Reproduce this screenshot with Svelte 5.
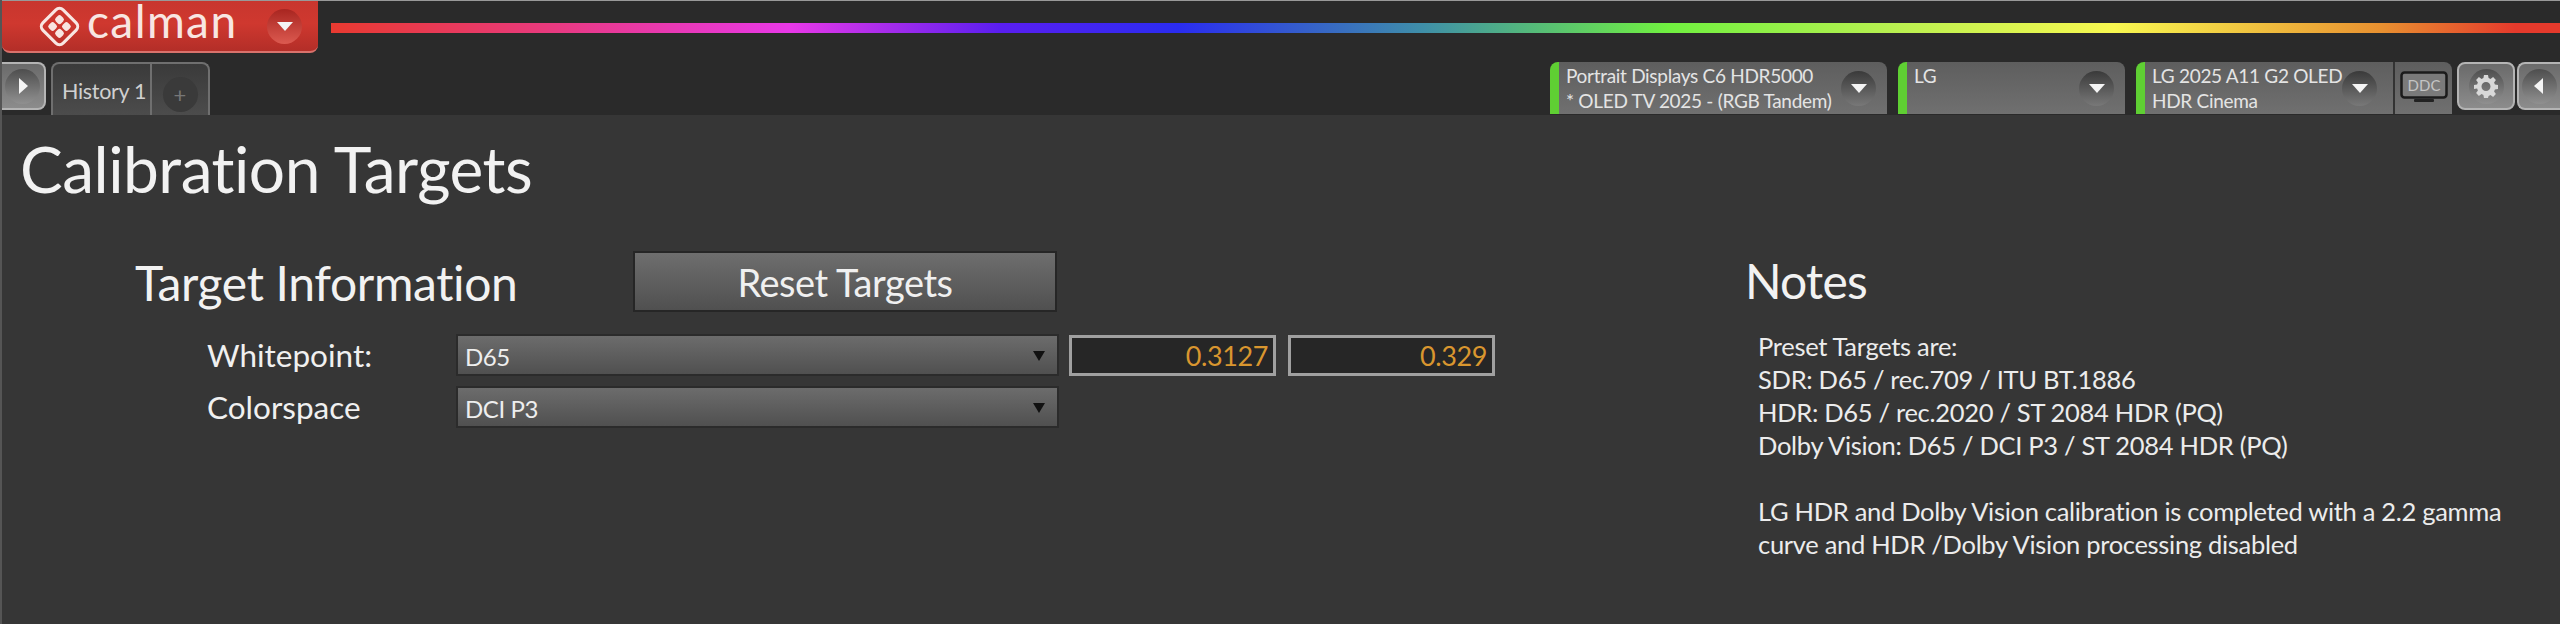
<script>
  const devices = [
    { lines: ['Portrait Displays C6 HDR5000', '* OLED TV 2025 - (RGB Tandem)'], width: 337 },
    { lines: ['LG', ''], width: 227 },
    { lines: ['LG 2025 A11 G2 OLED', 'HDR Cinema'], width: 316, ddc: true },
  ];

  const notes = [
    'Preset Targets are:',
    'SDR: D65 / rec.709 / ITU BT.1886',
    'HDR: D65 / rec.2020 / ST 2084 HDR (PQ)',
    'Dolby Vision: D65 / DCI P3 / ST 2084 HDR (PQ)',
    '',
    'LG HDR and Dolby Vision calibration is completed with a 2.2 gamma',
    'curve and HDR /Dolby Vision processing disabled',
  ];
</script>

<div class="app">
  <header class="top">
    <div class="brand-row">
      <div class="brand">
        <svg class="logo" viewBox="0 0 40 40" aria-hidden="true">
          <g transform="rotate(45 20 20)">
            <rect x="6" y="6" width="28" height="28" rx="5" fill="none" stroke="#f8e6e2" stroke-width="3" />
            <rect x="11.500" y="11.500" width="7.500" height="7.500" rx="2.500" fill="#f8e6e2" />
            <rect x="21" y="11.500" width="7.500" height="7.500" rx="2.500" fill="#f8e6e2" />
            <rect x="11.500" y="21" width="7.500" height="7.500" rx="2.500" fill="#f8e6e2" />
            <rect x="21" y="21" width="7.500" height="7.500" rx="2.500" fill="#f8e6e2" />
          </g>
        </svg>
        <span class="wordmark">calman</span>
        <span class="round red"><i class="tri-down"></i></span>
      </div>
      <div class="rainbow"></div>
    </div>

    <div class="tab-row">
      <button class="square first"><span class="round"><i class="tri-right"></i></span></button>
      <div class="tab">
        <span class="tab-label">History 1</span>
        <span class="tab-add"><span class="round dim">+</span></span>
      </div>

      <div class="devices">
        {#each devices as d}
          <div class="device" style="width: {d.width}px">
            <div class="device-text">
              <span>{d.lines[0]}</span>
              <span>{d.lines[1]}</span>
            </div>
            <span class="round"><i class="tri-down"></i></span>
            {#if d.ddc}
              <div class="ddc">
                <svg viewBox="0 0 48 34" width="48" height="34" aria-hidden="true">
                  <rect x="1.500" y="1.500" width="45" height="25" rx="3" fill="#7a7a7a" stroke="#1b1b1b" stroke-width="2.500" />
                  <rect x="14" y="28" width="20" height="3" rx="1" fill="#222" />
                  <text x="24" y="20" text-anchor="middle" class="ddc-label">DDC</text>
                </svg>
              </div>
            {/if}
          </div>
        {/each}
      </div>

      <button class="square gear">
        <span class="round">
          <svg viewBox="0 0 24 24" width="24" height="24" aria-hidden="true">
            <path fill="#d8d8d8" fill-rule="evenodd" d="M10 1h4l.6 3.100 1.900.8 2.600-1.800 2.800 2.800-1.800 2.600.8 1.900L24 11v4l-3.100.6-.8 1.900 1.800 2.600-2.800 2.800-2.600-1.800-1.900.8L14 24h-4l-.6-3.100-1.900-.8-2.600 1.800-2.800-2.800 1.800-2.600-.8-1.900L0 15v-4l3.100-.6.800-1.900-1.800-2.600 2.800-2.800 2.600 1.800 1.900-.8zM12 8a4.500 4.500 0 1 0 0 9 4.500 4.500 0 0 0 0-9z" />
          </svg>
        </span>
      </button>
      <button class="square last"><span class="round"><i class="tri-left"></i></span></button>
    </div>
  </header>

  <main class="content">
    <h1>Calibration Targets</h1>
    <div class="columns">
      <section class="targets">
        <div class="targets-head">
          <h2>Target Information</h2>
          <button class="reset">Reset Targets</button>
        </div>
        <div class="field">
          <span class="field-label">Whitepoint:</span>
          <div class="select"><span>D65</span><i></i></div>
          <div class="num">0.3127</div>
          <div class="num">0.329</div>
        </div>
        <div class="field">
          <span class="field-label">Colorspace</span>
          <div class="select"><span>DCI P3</span><i></i></div>
        </div>
      </section>

      <section class="notes">
        <h2>Notes</h2>
        <div class="note-lines">
          {#each notes as line}
            <p>{line}</p>
          {/each}
        </div>
      </section>
    </div>
  </main>
</div>

<style>
  :global(body) {
    margin: 0;
    background: #363636;
  }

  .app {
    width: 2560px;
    height: 624px;
    overflow: hidden;
    font-family: Lato, 'Open Sans', sans-serif;
    color: #f0f0f0;
    background: #363636;
    border-left: 2px solid #555;
    box-sizing: border-box;
  }

  .top {
    height: 115px;
    background: #2a2a2a;
    border-top: 1px solid #999;
    box-sizing: border-box;
    margin-left: -2px;
  }

  .brand-row {
    display: flex;
    align-items: center;
    gap: 13px;
    height: 61px;
  }

  .brand {
    width: 316px;
    height: 52px;
    margin: 0 0 9px 2px;
    flex: none;
    display: flex;
    align-items: center;
    box-sizing: border-box;
    padding-left: 37px;
    background: linear-gradient(#c8362e, #cf382f 45%, #b32e28);
    border-radius: 0 0 8px 8px;
    border-bottom: 2px solid #d9726c;
  }

  .logo {
    width: 41px;
    height: 41px;
  }

  .wordmark {
    font-size: 46px;
    line-height: 42px;
    padding-bottom: 10px;
    margin-left: 7px;
    color: #f8e6e2;
    width: 165px;
    letter-spacing: 1.4px;
  }

  .round {
    width: 35px;
    height: 35px;
    border-radius: 50%;
    flex: none;
    display: flex;
    align-items: center;
    justify-content: center;
    background: linear-gradient(#3a3a3a, #787878);
  }

  .round.red {
    background: linear-gradient(#a82520, #dc5a50);
    margin-left: 15px;
  }

  .round.dim {
    background: #3a3a3a;
    color: #777;
    font-size: 22px;
  }

  .square .round {
    background: linear-gradient(#4e4e4e, #909090);
  }

  .tri-down {
    width: 0;
    height: 0;
    border-left: 8.500px solid transparent;
    border-right: 8.500px solid transparent;
    border-top: 9px solid #f4f4f4;
  }

  .tri-right {
    width: 0;
    height: 0;
    margin-left: 2px;
    border-top: 8px solid transparent;
    border-bottom: 8px solid transparent;
    border-left: 9px solid #f4f4f4;
  }

  .tri-left {
    width: 0;
    height: 0;
    margin-right: 2px;
    border-top: 8px solid transparent;
    border-bottom: 8px solid transparent;
    border-right: 9px solid #f4f4f4;
  }

  .rainbow {
    flex: 1;
    height: 10px;
    margin-bottom: 7px;
    background: linear-gradient(
      90deg,
      #e83a30 0%,
      #e83a80 10%,
      #e838e8 20.6%,
      #5a1ef0 30%,
      #2a2cf0 38%,
      #3f8fa8 49%,
      #70f040 60%,
      #b8f050 70%,
      #f8f850 80%,
      #e89030 92%,
      #e53a2c 98%
    );
  }

  .tab-row {
    display: flex;
    align-items: flex-start;
    height: 53px;
  }

  .square {
    height: 48px;
    padding: 0;
    display: flex;
    align-items: center;
    justify-content: center;
    box-sizing: border-box;
    background: linear-gradient(#6a6a6a, #8c8c8c);
    border: 2px solid #b4b4b4;
    border-radius: 8px;
  }

  .square.first {
    width: 46px;
    border-left: 0;
    border-radius: 0 8px 8px 0;
  }

  .tab {
    height: 53px;
    width: 159px;
    margin-left: 5px;
    display: flex;
    box-sizing: border-box;
    background: linear-gradient(#3a3a3a, #4c4c4c);
    border: 2px solid #6f6f6f;
    border-bottom: 0;
    border-radius: 8px 8px 0 0;
  }

  .tab-label {
    width: 99px;
    box-sizing: border-box;
    padding: 14px 0 0 9px;
    font-size: 21.500px;
    line-height: 26px;
    letter-spacing: -0.3px;
    color: #d0d0d0;
    border-right: 2px solid #6f6f6f;
    white-space: nowrap;
  }

  .tab-add {
    flex: 1;
    display: flex;
    align-items: center;
    justify-content: center;
    padding-top: 10px;
  }

  .devices {
    display: flex;
    gap: 11px;
    margin-left: auto;
  }

  .device {
    height: 52px;
    box-sizing: border-box;
    padding-left: 7px;
    padding-right: 11px;
    display: flex;
    align-items: center;
    background: linear-gradient(#5e5e5e, #707070);
    border-left: 9px solid #5fcf33;
    border-radius: 8px 8px 0 0;
  }

  .device-text {
    flex: 1;
    display: flex;
    flex-direction: column;
    font-size: 19px;
    line-height: 25px;
    letter-spacing: -0.3px;
    color: #e4e4e4;
    white-space: nowrap;
  }

  .device-text span {
    min-height: 25px;
  }

  .ddc {
    width: 59px;
    height: 52px;
    margin: 0 -11px 0 16px;
    display: flex;
    align-items: center;
    justify-content: center;
    border-left: 2px solid #333;
    box-sizing: border-box;
    flex: none;
  }

  .ddc-label {
    font-size: 15px;
    fill: #c4c4c4;
  }

  .square.gear {
    width: 58px;
    margin-left: 5px;
  }

  .square.last {
    width: 43px;
    margin-left: 2px;
    border-right: 0;
    border-radius: 8px 0 0 8px;
  }

  .content {
    padding: 0 0 0 18px;
  }

  h1 {
    margin: 0;
    padding-top: 19px;
    font-size: 64px;
    line-height: 70px;
    font-weight: 400;
    letter-spacing: -0.5px;
    color: #f2f2f2;
  }

  h2 {
    margin: 3px 0 0;
    font-size: 48px;
    line-height: 54px;
    font-weight: 400;
    letter-spacing: -0.35px;
    color: #f2f2f2;
  }

  .columns {
    display: flex;
    padding-left: 115px;
  }

  .targets {
    width: 1610px;
    flex: none;
  }

  .targets-head {
    display: flex;
    align-items: center;
    padding-top: 47px;
    margin-bottom: 17px;
  }

  .targets-head h2 {
    width: 498px;
  }

  .reset {
    width: 424px;
    height: 61px;
    padding: 0;
    box-sizing: border-box;
    font-family: inherit;
    font-size: 38px;
    letter-spacing: -0.45px;
    color: #f0f0f0;
    background: linear-gradient(#6e6e6e, #505050);
    border: 2px solid #262626;
  }

  .field {
    display: flex;
    align-items: center;
    height: 52px;
    padding-left: 72px;
  }

  .field-label {
    width: 251px;
    font-size: 31.500px;
  }

  .select {
    width: 599px;
    height: 38px;
    box-sizing: border-box;
    padding: 2px 12px 0 7px;
    display: flex;
    align-items: center;
    justify-content: space-between;
    font-size: 24px;
    letter-spacing: -0.4px;
    color: #eee;
    background: linear-gradient(#6c6c6c, #505050);
    outline: 2px solid #2b2b2b;
  }

  .select i {
    width: 0;
    height: 0;
    border-left: 6px solid transparent;
    border-right: 6px solid transparent;
    border-top: 10px solid #111;
  }

  .num {
    width: 207px;
    height: 41px;
    margin-left: 12px;
    box-sizing: border-box;
    padding-right: 5px;
    text-align: right;
    font-size: 27px;
    line-height: 35px;
    letter-spacing: -0.4px;
    color: #d9962f;
    background: #262626;
    border: 3px solid #a0a0a0;
  }

  .notes h2 {
    padding-top: 47px;
    letter-spacing: -0.8px;
  }

  .note-lines {
    padding: 22px 0 0 13px;
    font-size: 25.500px;
    line-height: 33px;
    letter-spacing: -0.3px;
    color: #ececec;
  }

  .note-lines p {
    margin: 0;
    min-height: 33px;
    white-space: nowrap;
  }
</style>
